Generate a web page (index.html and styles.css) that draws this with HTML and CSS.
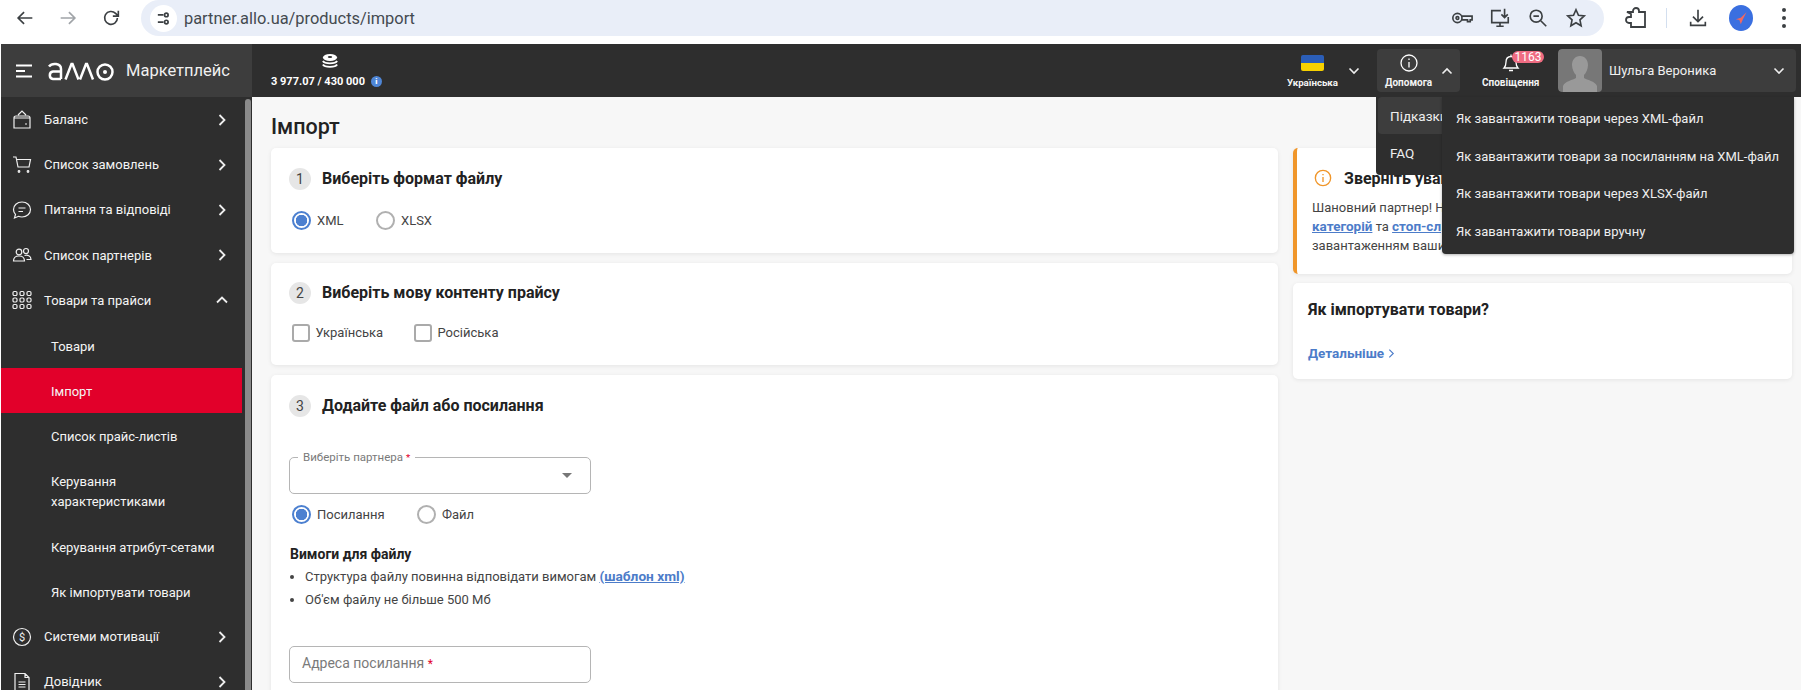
FILE: index.html
```html
<!DOCTYPE html>
<html lang="uk">
<head>
<meta charset="utf-8">
<title>Імпорт</title>
<link rel="stylesheet" href="styles.css">
</head>
<body>
<header class="chrome">
  <div class="nav-btns">
    <svg class="ci" viewBox="0 0 24 24"><path d="M20 12H5M11 5.5 4.5 12l6.500 6.500"/></svg>
    <svg class="ci dim" viewBox="0 0 24 24"><path d="M4 12h15M13 5.500l6.500 6.500-6.500 6.500"/></svg>
    <svg class="ci" viewBox="0 0 24 24"><path d="M19 12a7 7 0 1 1-2-5l2.500 2.500M20 4v6h-6"/></svg>
  </div>
  <div class="omnibox">
    <span class="site"><svg viewBox="0 0 24 24"><circle cx="16" cy="7" r="2.500"/><path d="M4 7h8M4 17h8"/><circle cx="16" cy="17" r="2.500" /></svg></span>
    <span class="url">partner.allo.ua/products/import</span>
    <div class="omni-icons">
      <svg class="ci" viewBox="0 0 24 24"><circle cx="7" cy="12" r="5"/><circle cx="7" cy="12" r="1.500"/><path d="M12 10h11v4h-2v2h-3v-2h-6"/></svg>
      <svg class="ci" viewBox="0 0 24 24"><path d="M13 4H3v13h18v-6M8 21h8M12 17v4M17 2v9M13.500 8l3.500 3.500L20.500 8"/></svg>
      <svg class="ci" viewBox="0 0 24 24"><circle cx="10" cy="10" r="6.500"/><path d="M15 15l6 6M7 10h6"/></svg>
      <svg class="ci" viewBox="0 0 24 24"><path d="m12 3 2.700 6 6.300.7-4.700 4.300 1.300 6.500-5.600-3.300-5.600 3.300 1.300-6.500L3 9.700 9.300 9z"/></svg>
    </div>
  </div>
  <div class="ext-icons">
    <svg class="ci puzzle" viewBox="0 0 24 24"><path d="M3 6h6V5a3 3 0 0 1 6 0v1h6v15H7v-4H5a3 3 0 0 1 0-6h2V8z"/></svg>
    <i class="sep"></i>
    <svg class="ci" viewBox="0 0 24 24"><path d="M12 3v13M6.500 10.500 12 16l5.500-5.500M4 16v4h16v-4"/></svg>
    <span class="profile"><svg viewBox="0 0 24 24"><path d="M19 3 14 13l-3 7-2-6-5-1 7-2z" fill="#f2685f"/></svg></span>
    <span class="dots"><i></i><i></i><i></i></span>
  </div>
</header>

<div class="app">
  <div class="topbar">
    <div class="brand">
      <svg class="burger" viewBox="0 0 18 14"><path d="M1 1.500h16M1 7h9M1 12.500h16"/></svg>
      <svg class="logo" viewBox="0 0 68 20"><g><path d="M2 5.500C5 1.500 14 2 14 8v10M14 10.500H6a3.800 3.800 0 0 0 0 7.500h8"/><path d="M18.500 18.500 24.500 3h1l6 15.500M33 18.500 39 3h1l6 15.500"/><circle cx="58" cy="11" r="7.500"/><circle cx="58" cy="11" r="2" fill="#fff" stroke="none"/></g></svg>
      <span class="brand-name">Маркетплейс</span>
    </div>
    <div class="balance">
      <svg class="coins" viewBox="0 0 20 18"><ellipse cx="10" cy="5" rx="8" ry="4" fill="#fff"/><ellipse cx="10" cy="4.500" rx="2.500" ry="1" fill="#2e2e2e"/><path d="M2 9c2 3.500 14 3.500 16 0M2 13c2 3.500 14 3.500 16 0" fill="none" stroke="#fff" stroke-width="2"/></svg>
      <div class="balance-row"><span>3 977.07 / 430 000</span><b class="i-dot">i</b></div>
    </div>
    <div class="top-right">
      <div class="tool tool-lang">
        <div class="tool-col">
          <span class="flag"></span>
          <span class="tool-label">Українська</span>
        </div>
        <svg class="chev" viewBox="0 0 12 8"><path d="m1.500 1.500 4.500 4.500 4.500-4.500"/></svg>
      </div>
      <div class="tool tool-help">
        <div class="tool-col">
          <svg class="t-icon" viewBox="0 0 20 20"><circle cx="10" cy="10" r="8"/><path d="M10 9v5.500M10 5.500v1.500"/></svg>
          <span class="tool-label">Допомога</span>
        </div>
        <svg class="chev" viewBox="0 0 12 8"><path d="m1.500 6.500 4.500-4.500 4.500 4.500"/></svg>
      </div>
      <div class="tool tool-bell">
        <div class="tool-col">
          <svg class="t-icon" viewBox="0 0 20 20"><path d="M3 15c2-2 2-3 2-6 0-3.500 2-5.500 5-5.500s5 2 5 5.500c0 3 0 4 2 6zM8 17.500h4M10 1.500v2"/></svg>
          <span class="tool-label">Сповіщення</span>
        </div>
        <span class="badge">1163</span>
      </div>
      <div class="user">
        <span class="avatar"><svg viewBox="0 0 44 44"><path d="M22 7c5 0 8 4 8 9 0 4-2 8-4 10v3c3 2 11 3 13 8v7H5v-7c2-5 10-6 13-8v-3c-2-2-4-6-4-10 0-5 3-9 8-9z" fill="#999"/></svg></span>
        <span class="user-name">Шульга Вероника</span>
        <svg class="chev" viewBox="0 0 12 8"><path d="m1.500 1.500 4.500 4.500 4.500-4.500"/></svg>
      </div>
    </div>
  </div>

  <div class="body-row">
    <aside class="sidebar">
      <nav class="menu">
        <a class="row"><svg class="m-icon" viewBox="0 0 20 20"><path d="M2 8h16v10H2zM2 8c0-1.500 1-2 2-2h12c1 0 2 .5 2 2M6 5l4-4 4 4M13 14h2"/></svg><span>Баланс</span><svg class="arrow" viewBox="0 0 8 12"><path d="m1.500 1 5 5-5 5"/></svg></a>
        <a class="row"><svg class="m-icon" viewBox="0 0 20 20"><path d="M1 2h3l2 10h11l1.500-7.500H4.500"/><circle cx="7" cy="16.500" r=".8"/><circle cx="16" cy="16.500" r=".8"/></svg><span>Список замовлень</span><svg class="arrow" viewBox="0 0 8 12"><path d="m1.500 1 5 5-5 5"/></svg></a>
        <a class="row"><svg class="m-icon" viewBox="0 0 20 20"><path d="M10 2c5 0 8.500 3.500 8.500 7.500S15 17 10 17c-1 0-2.500-.2-3.500-.7L2.500 18l1-3.500C2 13 1.500 11.500 1.500 9.500 1.500 5.500 5 2 10 2zM6.500 8h7M6.500 11.500h4.500"/></svg><span>Питання та відповіді</span><svg class="arrow" viewBox="0 0 8 12"><path d="m1.500 1 5 5-5 5"/></svg></a>
        <a class="row"><svg class="m-icon" viewBox="0 0 20 20"><circle cx="7" cy="7" r="2.800"/><circle cx="14" cy="6" r="2.500"/><path d="M1.500 16c0-3.500 2.500-5 5.500-5s5.500 1.500 5.500 5zM12.500 10.500c3-1 6.500.5 6.500 4h-4.500"/></svg><span>Список партнерів</span><svg class="arrow" viewBox="0 0 8 12"><path d="m1.500 1 5 5-5 5"/></svg></a>
        <a class="row"><svg class="m-icon" viewBox="0 0 20 20"><rect x="1" y="1.500" width="4" height="4" rx="1.200"/><rect x="8" y="1.500" width="4" height="4" rx="1.200"/><rect x="15" y="1.500" width="4" height="4" rx="1.200"/><rect x="1" y="8" width="4" height="4" rx="1.200"/><rect x="8" y="8" width="4" height="4" rx="1.200"/><rect x="15" y="8" width="4" height="4" rx="1.200"/><rect x="1" y="14.500" width="4" height="4" rx="1.200"/><rect x="8" y="14.500" width="4" height="4" rx="1.200"/><rect x="15" y="14.500" width="4" height="4" rx="1.200"/></svg><span>Товари та прайси</span><svg class="arrow up" viewBox="0 0 12 8"><path d="m1 6.500 5-5 5 5"/></svg></a>
        <a class="sub">Товари</a>
        <a class="sub active">Імпорт</a>
        <a class="sub">Список прайс-листів</a>
        <a class="sub tall">Керування<br>характеристиками</a>
        <a class="sub">Керування атрибут-сетами</a>
        <a class="sub">Як імпортувати товари</a>
        <a class="row"><svg class="m-icon" viewBox="0 0 20 20"><circle cx="10" cy="10" r="8.500"/><text x="10" y="14" class="dollar">$</text></svg><span>Системи мотивації</span><svg class="arrow" viewBox="0 0 8 12"><path d="m1.500 1 5 5-5 5"/></svg></a>
        <a class="row"><svg class="m-icon" viewBox="0 0 20 20"><path d="M3 1.500h10l4 4v13H3zM13 1.500v4h4M6.500 10h7M6.500 12.500h7M6.500 15h7"/></svg><span>Довідник</span><svg class="arrow" viewBox="0 0 8 12"><path d="m1.500 1 5 5-5 5"/></svg></a>
      </nav>
      <div class="scroll"><i class="thumb"></i></div>
    </aside>

    <main class="content">
      <h1>Імпорт</h1>
      <div class="columns">
        <div class="col-main">
          <section class="card c1">
            <div class="step"><span class="num">1</span><h2>Виберіть формат файлу</h2></div>
            <div class="opts">
              <label class="opt o-xml"><span class="radio on"></span>XML</label>
              <label class="opt"><span class="radio"></span>XLSX</label>
            </div>
          </section>
          <section class="card c2">
            <div class="step"><span class="num">2</span><h2>Виберіть мову контенту прайсу</h2></div>
            <div class="opts">
              <label class="opt o-ua"><span class="check"></span>Українська</label>
              <label class="opt"><span class="check"></span>Російська</label>
            </div>
          </section>
          <section class="card c3">
            <div class="step"><span class="num">3</span><h2>Додайте файл або посилання</h2></div>
            <div class="field select">
              <span class="float">Виберіть партнера <em>*</em></span>
              <i class="caret"></i>
            </div>
            <div class="opts opts3">
              <label class="opt o-link"><span class="radio on"></span>Посилання</label>
              <label class="opt"><span class="radio"></span>Файл</label>
            </div>
            <p class="req-title">Вимоги для файлу</p>
            <ul class="req">
              <li>Структура файлу повинна відповідати вимогам <a>(шаблон xml)</a></li>
              <li>Об'єм файлу не більше 500 Мб</li>
            </ul>
            <div class="field addr">Адреса посилання <em>*</em></div>
          </section>
        </div>
        <div class="col-side">
          <section class="card notice">
            <div class="notice-head">
              <svg class="n-icon" viewBox="0 0 20 20"><circle cx="10" cy="10" r="8.500"/><path d="M10 9v5.500M10 5.500v1.500"/></svg>
              <h2>Зверніть увагу</h2>
            </div>
            <p>Шановний партнер! Н<br><a>категорій</a> та <a>стоп-сл</a><br>завантаженням ваши</p>
          </section>
          <section class="card howto">
            <h2>Як імпортувати товари?</h2>
            <a class="more">Детальніше <svg viewBox="0 0 8 12"><path d="m1.500 1.500 4.500 4.500-4.500 4.500"/></svg></a>
          </section>
        </div>
      </div>
    </main>
  </div>

  <div class="help-menu">
    <a class="hm hover">Підказки</a>
    <a class="hm">FAQ</a>
  </div>
  <div class="sub-menu">
    <a>Як завантажити товари через XML-файл</a>
    <a>Як завантажити товари за посиланням на XML-файл</a>
    <a>Як завантажити товари через XLSX-файл</a>
    <a>Як завантажити товари вручну</a>
  </div>
</div>
</body>
</html>
```
FILE: styles.css
```css
* { box-sizing: border-box; }
html, body { margin: 0; height: 690px; overflow: hidden; background: #fff; }
body { font-family: Roboto, "Liberation Sans", sans-serif; color: #222; }
a { color: inherit; text-decoration: none; }
svg { display: block; }

/* browser chrome */
.chrome { height: 44px; display: flex; align-items: flex-start; background: #fff; }
.ci { width: 22px; height: 22px; fill: none; stroke: #3c4043; stroke-width: 1.800; flex: none; }
.ci.dim { stroke: #a0a4a8; }
.nav-btns { width: 141px; height: 36px; display: flex; align-items: center; gap: 21px; padding-left: 14px; }
.omnibox { width: 1463px; height: 36px; background: #e9eef8; border-radius: 0 18px 18px 18px; border-top-left-radius: 18px; display: flex; align-items: center; padding-left: 9px; }
.site { width: 27px; height: 27px; border-radius: 50%; background: #fff; display: flex; align-items: center; justify-content: center; flex: none; }
.site svg { width: 17px; height: 17px; fill: none; stroke: #3c4043; stroke-width: 2.400; }
.url { margin-left: 7px; font-size: 16.400px; color: #444a50; }
.omni-icons { margin-left: auto; display: flex; gap: 16px; padding-right: 17px; }
.ext-icons { flex: 1; height: 36px; display: flex; align-items: center; padding-left: 21px; }
.puzzle { width: 24px; height: 24px; margin-left: -1px; }
.sep { width: 1px; height: 20px; background: #d3dfef; margin: 0 20px 0 18px; }
.profile { width: 24px; height: 26px; border-radius: 50%; background: #3a6fe0; margin-left: 20px; display: flex; align-items: center; justify-content: center; }
.profile svg { width: 17px; height: 17px; }
.dots { display: flex; flex-direction: column; gap: 4px; margin-left: 29px; }
.dots i { width: 4px; height: 4px; border-radius: 50%; background: #3c4043; }

/* app shell */
.app { position: relative; width: 1800px; height: 646px; margin-left: 1px; display: flex; flex-direction: column; }
.topbar { height: 53px; background: #2e2e2e; display: flex; align-items: stretch; color: #fff; flex: none; }
.brand { width: 251px; background: #3d3d3d; display: flex; align-items: center; padding-left: 14px; }
.burger { width: 18px; height: 14px; fill: none; stroke: #fff; stroke-width: 1.800; }
.logo { width: 68px; height: 20px; margin-left: 14px; fill: none; stroke: #fff; stroke-width: 2.500; }
.brand-name { margin-left: 11px; font-size: 16.500px; color: #f0f0f0; }
.balance { margin-left: 19px; width: 130px; display: flex; flex-direction: column; }
.coins { width: 18px; height: 16px; margin: 9px 0 0 50px; }
.balance-row { display: flex; align-items: center; gap: 6px; font-size: 11px; font-weight: 700; margin-top: 6px; white-space: nowrap; }
.i-dot { width: 11px; height: 11px; border-radius: 50%; background: #4f86d6; color: #fff; font-size: 8px; line-height: 11px; text-align: center; }
.top-right { margin-left: auto; display: flex; align-items: center; height: 100%; padding-right: 5px; }
.tool { height: 43px; display: flex; align-items: center; border-radius: 4px; position: relative; }
.tool-col { display: flex; flex-direction: column; align-items: center; }
.tool-label { font-size: 10px; font-weight: 700; color: #f4f4f4; margin-top: 3px; line-height: 13px; white-space: nowrap; }
.tool-lang .tool-label { font-size: 9.700px; }
.chev { width: 12px; height: 8px; fill: none; stroke: #eee; stroke-width: 1.600; flex: none; }
.tool-lang { margin-right: 17px; }
.tool-lang .chev { margin-left: 10px; }
.flag { width: 23px; height: 16px; border-radius: 2px; background: linear-gradient(#2b5eb8 50%, #f7d100 50%); margin-bottom: 2px; margin-top: 3px; }
.tool-help { width: 83px; background: #3d3d3d; padding-left: 8px; }
.tool-help .chev { margin-left: 9px; }
.t-icon { width: 20px; height: 20px; fill: none; stroke: #fff; stroke-width: 1.300; }
.tool-bell { margin-left: 22px; width: 76px; }
.badge { position: absolute; left: 30px; top: 2px; width: 32px; height: 12px; line-height: 12px; border-radius: 6px; background: #ef6c82; color: #fff; font-size: 12px; text-align: center; }
.user { width: 238px; height: 43px; background: #3d3d3d; border-radius: 4px; display: flex; align-items: center; overflow: hidden; margin-left: 0; }
.avatar { width: 44px; height: 43px; background: #777; border-radius: 4px; overflow: hidden; }
.avatar svg { width: 44px; height: 44px; }
.user-name { margin-left: 7px; font-size: 13px; color: #f0f0f0; }
.user .chev { margin-left: auto; margin-right: 11px; }

.body-row { flex: 1; display: flex; min-height: 0; }

/* sidebar */
.sidebar { width: 251px; display: flex; background: #2e2e2e; flex: none; overflow: hidden; }
.menu { width: 241px; flex: none; color: #f4f4f4; font-size: 13px; }
.row { height: 45.200px; display: flex; align-items: center; padding-left: 11px; }
.m-icon { width: 20px; height: 20px; fill: none; stroke: #f0f0f0; stroke-width: 1.200; flex: none; margin-right: 12px; }
.dollar { fill: #f0f0f0; stroke: none; font-size: 11px; text-anchor: middle; font-family: Roboto, sans-serif; }
.arrow { width: 8px; height: 12px; fill: none; stroke: #eee; stroke-width: 1.800; margin-left: auto; margin-right: 16px; }
.arrow.up { width: 12px; height: 8px; margin-right: 14px; }
.sub { display: block; height: 45px; padding: 14px 10px 0 50px; line-height: 20px; }
.sub.tall { height: 66px; }
.sub.active { background: #e2002a; }
.scroll { width: 10px; background: #2e2e2e; }
.thumb { display: block; width: 6px; height: 600px; margin: 2px 0 0 3px; background: #8a8a8a; border-radius: 3px; }

/* content */
.content { flex: 1; background: #f7f7f7; padding: 17px 8px 0 19px; min-width: 0; overflow: hidden; }
h1 { margin: 0; font-size: 21.500px; font-weight: 500; line-height: 26px; color: #222; height: 34px; }
.columns { display: flex; gap: 15px; align-items: flex-start; }
.col-main { width: 1007px; display: flex; flex-direction: column; gap: 10px; flex: none; }
.col-side { width: 499px; display: flex; flex-direction: column; gap: 9px; flex: none; }
.card { background: #fff; border-radius: 5px; box-shadow: 0 1px 4px rgba(0,0,0,.08); }
.c1 { height: 105px; padding: 20px 18px 0; }
.c2 { height: 102px; padding: 19px 18px 0; }
.c3 { height: 340px; padding: 20px 18px 0; }
.step { display: flex; align-items: center; height: 22px; }
.num { width: 22px; height: 22px; border-radius: 50%; background: #e6e6e6; text-align: center; line-height: 22px; font-size: 14px; color: #444; margin-right: 11px; flex: none; }
h2 { margin: 0; font-size: 16px; font-weight: 700; color: #222; }
.step h2 { margin-top: -2px; }
.opts { display: flex; margin-top: 21px; padding-left: 3px; }
.c2 .opts { margin-top: 19px; }
.opt { display: flex; align-items: center; font-size: 13px; color: #444; height: 19px; }
.radio { width: 19px; height: 19px; border-radius: 50%; border: 2px solid #b0b0b0; margin-right: 6px; flex: none; }
.radio.on { border-color: #4c80d0; background: radial-gradient(circle, #4c80d0 0 5.500px, #fff 6px); }
.o-xml { width: 84px; }
.o-ua { width: 122px; }
.o-link { width: 125px; }
.check { width: 18px; height: 18px; border: 2px solid #aaa; border-radius: 3px; margin-right: 5.500px; flex: none; }
.field { border: 1px solid #b5b5b5; border-radius: 5px; width: 302px; height: 37px; position: relative; }
.select { margin-top: 40px; }
.float { position: absolute; left: 8px; top: -7px; padding: 0 5px; background: #fff; font-size: 11.500px; line-height: 13px; color: #7a7a7a; white-space: nowrap; }
em { font-style: normal; color: #e2002a; font-size: .85em; }
.caret { position: absolute; right: 18px; top: 15px; border: 5px solid transparent; border-top: 5px solid #777; border-bottom: 0; }
.opts3 { margin-top: 11px; }
.req-title { margin: 21px 0 0 1px; font-size: 14px; font-weight: 700; line-height: 18px; color: #222; }
.req { margin: 2px 0 0; padding: 0 0 0 16px; font-size: 13px; line-height: 23px; color: #444; }
.req a { color: #4c7cc9; font-weight: 700; font-size: 13.700px; text-decoration: underline; }
.addr { margin-top: 35px; padding-left: 12px; font-size: 14px; line-height: 33px; color: #7a7a7a; }

.notice { height: 126px; border-left: 4px solid #f0962a; padding: 21px 12px 0 17px; }
.notice-head { display: flex; align-items: center; height: 18px; gap: 12px; }
.n-icon { width: 18px; height: 18px; fill: none; stroke: #f0962a; stroke-width: 1.500; flex: none; }
.notice p { margin: 11px 0 0 -2px; font-size: 13px; line-height: 19px; color: #444; }
.notice a { color: #4c7cc9; font-weight: 700; font-size: 13.500px; text-decoration: underline; }
.howto { height: 96px; padding: 18px 15px 0; position: relative; }
.howto h2 { line-height: 18px; }
.more { display: flex; align-items: center; gap: 4px; margin-top: 26px; font-size: 13.500px; font-weight: 700; color: #4c7cc9; }
.more svg { width: 7px; height: 11px; fill: none; stroke: #4c7cc9; stroke-width: 1.300; }

/* open dropdowns */
.help-menu { position: absolute; left: 1375px; top: 53px; width: 120px; height: 78px; background: #2e2e2e; padding: 0 2px; color: #eee; font-size: 13.500px; border-radius: 0 0 4px 4px; }
.hm { display: flex; align-items: center; height: 37px; padding-left: 12px; border-radius: 4px; }
.hm.hover { background: #3d3d3d; height: 37px; }
.sub-menu { position: absolute; left: 1441px; top: 53px; width: 352px; height: 157px; background: #2e2e2e; border-radius: 0 0 4px 4px; box-shadow: 0 1px 3px rgba(0,0,0,.3); padding-top: 3px; color: #eee; font-size: 13px; }
.sub-menu a { display: flex; align-items: center; height: 37.500px; padding-left: 14px; }
```
